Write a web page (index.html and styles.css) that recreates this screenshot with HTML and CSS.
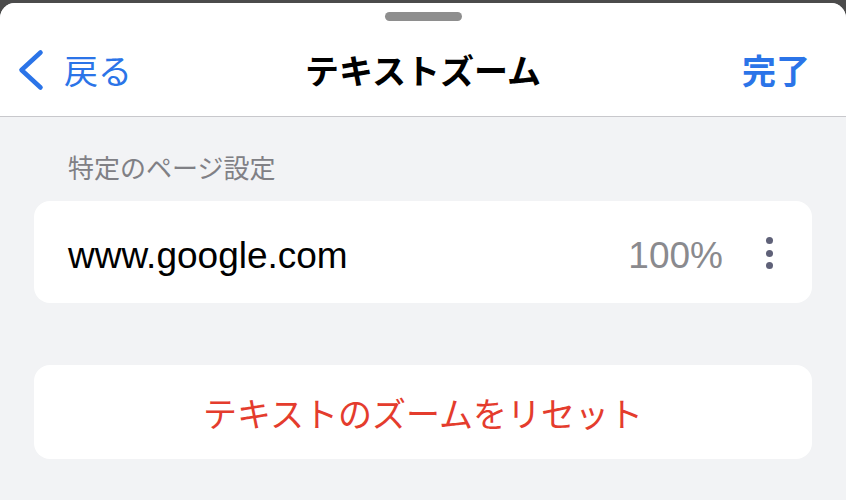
FILE: index.html
```html
<!DOCTYPE html>
<html lang="ja">
<head>
<meta charset="utf-8">
<title>テキストズーム</title>
<link rel="stylesheet" href="styles.css">
</head>
<body>
<div class="sheet">
  <header class="nav">
    <div class="grabber"></div>
    <div class="nav-row">
      <a class="back">
        <svg class="chevron" width="26" height="42" viewBox="0 0 26 42"><polyline points="22.5,3.5 3.5,21 22.5,38.5" fill="none" stroke="currentColor" stroke-width="4.6" stroke-linecap="round" stroke-linejoin="round"/></svg>
        <span>戻る</span>
      </a>
      <h1 class="title">テキストズーム</h1>
      <a class="done">完了</a>
    </div>
  </header>
  <main class="content">
    <div class="section-title">特定のページ設定</div>
    <div class="card site-row">
      <span class="site">www.google.com</span>
      <span class="percent">100%</span>
      <span class="dots"><i></i><i></i><i></i></span>
    </div>
    <div class="card reset">テキストのズームをリセット</div>
  </main>
</div>
</body>
</html>
```
FILE: styles.css
```css
html, body {
  margin: 0;
  height: 100%;
}
body {
  background: #4b4b4b;
  padding-top: 3px;
  box-sizing: border-box;
  overflow: hidden;
  font-family: "Noto Sans CJK JP", "Liberation Sans", sans-serif;
}
.sheet {
  background: #f2f3f5;
  border-radius: 15px 15px 0 0;
  height: 497px;
  overflow: hidden;
}
.nav {
  background: #fff;
  border-bottom: 1px solid #c8c8cc;
  height: 113px;
  display: flex;
  flex-direction: column;
}
.grabber {
  width: 77px;
  height: 9px;
  border-radius: 5px;
  background: #8e8e8e;
  margin: 9px auto 0;
}
.nav-row {
  flex: 1;
  display: grid;
  grid-template-columns: 1fr auto 1fr;
  align-items: center;
  padding: 2px 36px 0;
}
.back {
  display: flex;
  align-items: center;
  gap: 20px;
  margin-left: -18px;
  color: #2b74e8;
  font-size: 34px;
  line-height: 40px;
}
.chevron {
  display: block;
}
.title {
  margin: 0;
  font-size: 34px;
  font-weight: 700;
  line-height: 40px;
  color: #000;
}
.done {
  justify-self: end;
  color: #2b74e8;
  font-size: 34px;
  font-weight: 700;
  line-height: 40px;
}
.content {
  padding: 0 34px;
}
.section-title {
  padding: 34px 0 0 34px;
  margin-bottom: 18px;
  font-size: 26px;
  line-height: 32px;
  color: #808085;
}
.card {
  background: #fff;
  border-radius: 16px;
}
.site-row {
  height: 102px;
  display: flex;
  align-items: center;
  padding: 0 39px 0 34px;
  font-family: "Liberation Sans", "Noto Sans CJK JP", sans-serif;
  font-size: 37px;
}
.site {
  flex: 1;
  color: #000;
  padding-top: 8px;
}
.percent {
  color: #8a8a8e;
  margin-right: 43px;
  padding-top: 8px;
}
.dots {
  display: flex;
  flex-direction: column;
  gap: 5.5px;
  padding-top: 2px;
}
.dots i {
  display: block;
  width: 7px;
  height: 7px;
  border-radius: 50%;
  background: #5f6178;
}
.reset {
  margin-top: 62px;
  height: 94px;
  display: flex;
  align-items: center;
  justify-content: center;
  color: #e43c2d;
  font-size: 34px;
}
```
